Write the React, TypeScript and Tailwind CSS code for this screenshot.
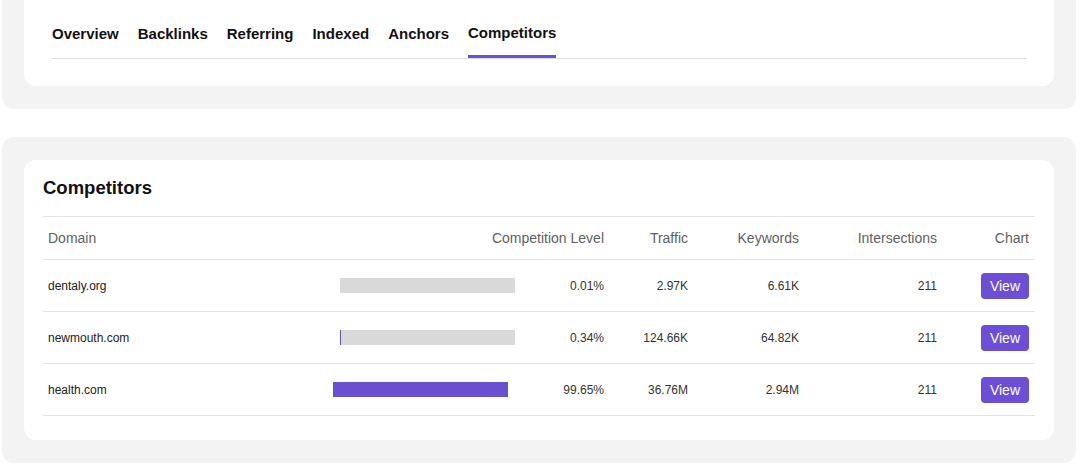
import React from "react";

const tabs = ["Overview", "Backlinks", "Referring", "Indexed", "Anchors", "Competitors"];

const rows = [
  { domain: "dentaly.org", pct: 0.01, label: "0.01%", traffic: "2.97K", keywords: "6.61K", inter: "211" },
  { domain: "newmouth.com", pct: 0.34, label: "0.34%", traffic: "124.66K", keywords: "64.82K", inter: "211" },
  { domain: "health.com", pct: 99.65, label: "99.65%", traffic: "36.76M", keywords: "2.94M", inter: "211" },
];

export default function App() {
  return (
    <div
      className="w-[1080px] h-[469px] bg-white overflow-hidden"
      style={{ fontFamily: '"Liberation Sans", Arial, sans-serif' }}
    >
      {/* Panel 1: tabs */}
      <div className="ml-[2px] w-[1074px] bg-[#f3f3f3] rounded-b-[12px] px-[22px] pb-[23px]">
        <div className="bg-white rounded-b-[12px] px-[28px] pt-[24px] pb-[27px]">
          <div className="flex items-end gap-[19px] border-b border-[#dcdcdc] mr-[-1px]">
            {tabs.map((t) => {
              const active = t === "Competitors";
              return (
                <div
                  key={t}
                  className={
                    active
                      ? "text-[15px] leading-[18px] font-bold text-[#111] pb-[13px] border-b-[3px] border-[#6c4fd4]"
                      : "text-[15px] leading-[18px] font-bold text-[#111] pb-[15px]"
                  }
                >
                  {t}
                </div>
              );
            })}
          </div>
        </div>
      </div>

      {/* Panel 2: competitors table */}
      <div className="ml-[2px] mt-[28px] w-[1074px] bg-[#f3f3f3] rounded-[12px] px-[22px] pt-[23px] pb-[23px]">
        <div className="bg-white rounded-[12px] px-[19px] pt-[17px] pb-[24px]">
          <h2 className="text-[18.5px] leading-[22px] font-bold text-[#111] mb-[17px]">Competitors</h2>
          <div className="border-t border-[#e3e3e3]">
            <div className="grid grid-cols-[257px_310px_84px_111px_138px_92px] h-[43px] items-center border-b border-[#e3e3e3] text-[14px] text-[#5f5f5f]">
              <div className="pl-[5px]">Domain</div>
              <div className="text-right pr-[6px]">Competition Level</div>
              <div className="text-right pr-[6px]">Traffic</div>
              <div className="text-right pr-[6px]">Keywords</div>
              <div className="text-right pr-[6px]">Intersections</div>
              <div className="text-right pr-[6px]">Chart</div>
            </div>
            {rows.map((r) => (
              <div
                key={r.domain}
                className="grid grid-cols-[257px_310px_84px_111px_138px_92px] h-[52px] items-center border-b border-[#e3e3e3] text-[12px] text-[#333]"
              >
                <div className="pl-[5px] text-[#222]">{r.domain}</div>
                <div className="flex items-center justify-end gap-[55px] pr-[6px]">
                  <div className="w-[175px] h-[15px] bg-[#d9d9d9]">
                    <div className="h-full bg-[#6a4fd0]" style={{ width: `${r.pct}%` }} />
                  </div>
                  <span>{r.label}</span>
                </div>
                <div className="text-right pr-[6px]">{r.traffic}</div>
                <div className="text-right pr-[6px]">{r.keywords}</div>
                <div className="text-right pr-[6px]">{r.inter}</div>
                <div className="flex justify-end pr-[6px]">
                  <button className="h-[26px] px-[9px] rounded-[4px] bg-[#6c4fd6] text-white text-[14px] leading-none">
                    View
                  </button>
                </div>
              </div>
            ))}
          </div>
        </div>
      </div>
    </div>
  );
}
